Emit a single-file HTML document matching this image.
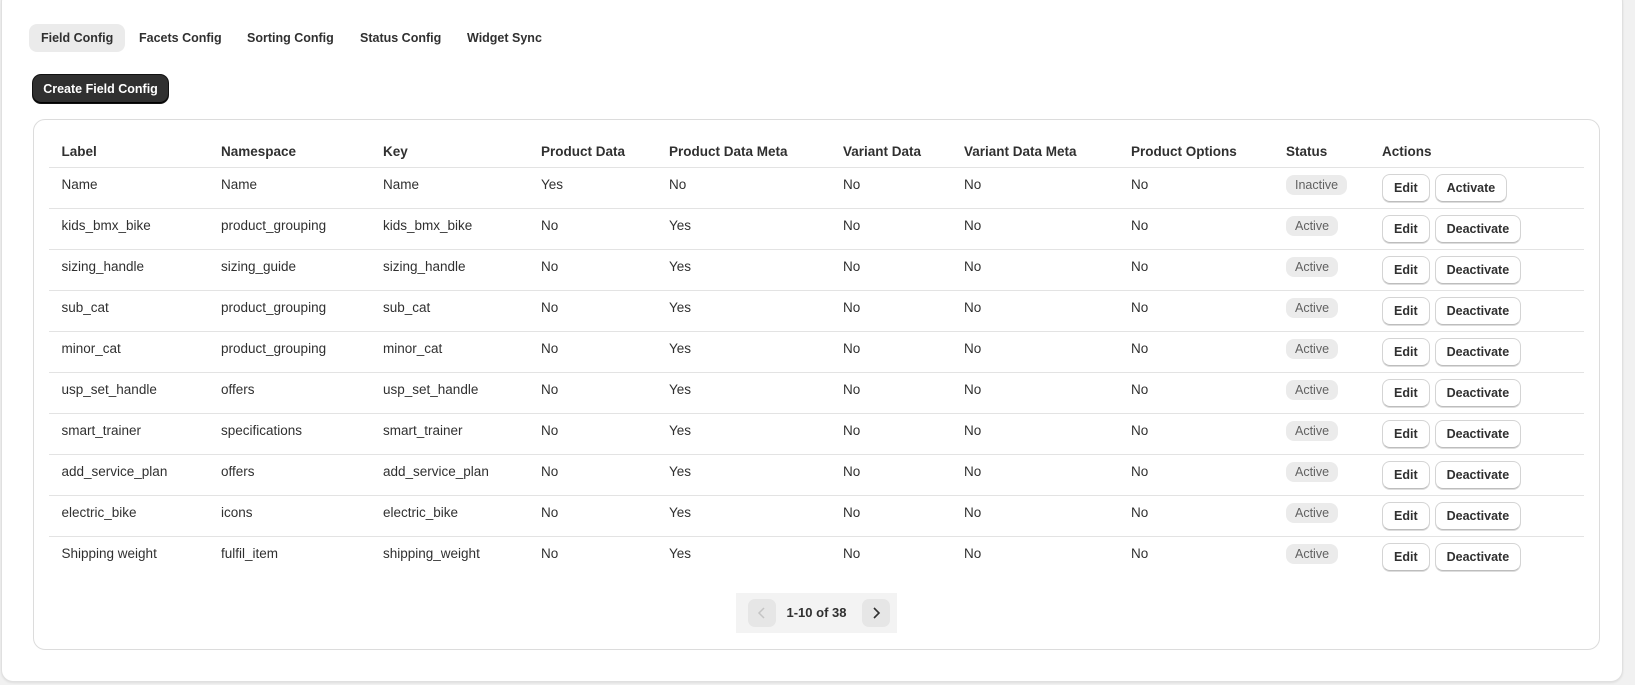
<!DOCTYPE html>
<html><head><style>
*{box-sizing:border-box;margin:0;padding:0}
body{width:1635px;height:685px;background:#f1f1f1;font-family:"Liberation Sans",Arial,sans-serif;color:#303030;position:relative;overflow:hidden}
.panel{position:absolute;left:1px;top:-10px;width:1622px;height:692px;background:#fff;border:1px solid #e0e0e0;border-radius:12px;box-shadow:0 1px 2px rgba(0,0,0,.08)}
.tab{position:absolute;top:24px;height:28px;line-height:28px;font-size:12.5px;font-weight:bold;color:#303030;padding:0 12px;border-radius:8px}
.tab.on{background:#ebebeb}
.create{position:absolute;left:33px;top:75px;width:135px;height:28px;background:#303030;color:#fff;border-radius:8px;font-size:12.5px;font-weight:bold;text-align:center;line-height:28px;box-shadow:inset 0 -1px 0 #000,0 0 0 1px #111}
.card{position:absolute;left:33px;top:119px;width:1567px;height:531px;border:1px solid #dcdcdc;border-radius:12px;background:#fff}
table{position:absolute;left:49px;top:135px;border-collapse:collapse;table-layout:fixed;width:1535px;font-size:13.5px}
th{text-align:left;font-weight:bold;height:32px;padding-left:12px;padding-top:2px;border-bottom:1px solid #e3e3e3;color:#303030}
td{height:41px;padding-left:12px;padding-bottom:6px;border-bottom:1px solid #e3e3e3;color:#303030}
tr:last-child td{border-bottom:none}
th:first-child,td:first-child{padding-left:12.5px}
.badge{display:inline-block;background:#ebebeb;color:#616161;border-radius:8px;font-size:12.5px;padding:0 9px;height:20px;line-height:20px}
.btn{position:relative;top:3px;display:inline-block;border:1px solid #d4d4d4;border-bottom-color:#bdbdbd;border-radius:8px;height:28px;line-height:26px;font-size:12.5px;font-weight:bold;padding:0 11px;margin-right:5px;background:#fff;color:#303030;box-shadow:0 1px 0 #ddd}
.pag{position:absolute;left:736px;top:593px;width:161px;height:40px;background:#f3f3f3}
.pb{position:absolute;top:6px;width:28px;height:28px;border-radius:7px;background:#e6e6e6}
.pt{position:absolute;left:0;width:161px;top:0;line-height:40px;text-align:center;font-size:13px;font-weight:bold}
</style></head><body>
<div class="panel"></div>
<div class="tab on" style="left:29px">Field Config</div>
<div class="tab" style="left:127px">Facets Config</div>
<div class="tab" style="left:235px">Sorting Config</div>
<div class="tab" style="left:348px">Status Config</div>
<div class="tab" style="left:455px">Widget Sync</div>
<div class="create">Create Field Config</div>
<div class="card"></div>
<table>
<colgroup><col style="width:160px"><col style="width:162px"><col style="width:158px"><col style="width:128px"><col style="width:174px"><col style="width:121px"><col style="width:167px"><col style="width:155px"><col style="width:96px"><col style="width:214px"></colgroup>
<tr><th>Label</th><th>Namespace</th><th>Key</th><th>Product Data</th><th>Product Data Meta</th><th>Variant Data</th><th>Variant Data Meta</th><th>Product Options</th><th>Status</th><th>Actions</th></tr>
<tr><td>Name</td><td>Name</td><td>Name</td><td>Yes</td><td>No</td><td>No</td><td>No</td><td>No</td><td><span class="badge">Inactive</span></td><td><span class="btn">Edit</span><span class="btn">Activate</span></td></tr>
<tr><td>kids_bmx_bike</td><td>product_grouping</td><td>kids_bmx_bike</td><td>No</td><td>Yes</td><td>No</td><td>No</td><td>No</td><td><span class="badge">Active</span></td><td><span class="btn">Edit</span><span class="btn">Deactivate</span></td></tr>
<tr><td>sizing_handle</td><td>sizing_guide</td><td>sizing_handle</td><td>No</td><td>Yes</td><td>No</td><td>No</td><td>No</td><td><span class="badge">Active</span></td><td><span class="btn">Edit</span><span class="btn">Deactivate</span></td></tr>
<tr><td>sub_cat</td><td>product_grouping</td><td>sub_cat</td><td>No</td><td>Yes</td><td>No</td><td>No</td><td>No</td><td><span class="badge">Active</span></td><td><span class="btn">Edit</span><span class="btn">Deactivate</span></td></tr>
<tr><td>minor_cat</td><td>product_grouping</td><td>minor_cat</td><td>No</td><td>Yes</td><td>No</td><td>No</td><td>No</td><td><span class="badge">Active</span></td><td><span class="btn">Edit</span><span class="btn">Deactivate</span></td></tr>
<tr><td>usp_set_handle</td><td>offers</td><td>usp_set_handle</td><td>No</td><td>Yes</td><td>No</td><td>No</td><td>No</td><td><span class="badge">Active</span></td><td><span class="btn">Edit</span><span class="btn">Deactivate</span></td></tr>
<tr><td>smart_trainer</td><td>specifications</td><td>smart_trainer</td><td>No</td><td>Yes</td><td>No</td><td>No</td><td>No</td><td><span class="badge">Active</span></td><td><span class="btn">Edit</span><span class="btn">Deactivate</span></td></tr>
<tr><td>add_service_plan</td><td>offers</td><td>add_service_plan</td><td>No</td><td>Yes</td><td>No</td><td>No</td><td>No</td><td><span class="badge">Active</span></td><td><span class="btn">Edit</span><span class="btn">Deactivate</span></td></tr>
<tr><td>electric_bike</td><td>icons</td><td>electric_bike</td><td>No</td><td>Yes</td><td>No</td><td>No</td><td>No</td><td><span class="badge">Active</span></td><td><span class="btn">Edit</span><span class="btn">Deactivate</span></td></tr>
<tr><td>Shipping weight</td><td>fulfil_item</td><td>shipping_weight</td><td>No</td><td>Yes</td><td>No</td><td>No</td><td>No</td><td><span class="badge">Active</span></td><td><span class="btn">Edit</span><span class="btn">Deactivate</span></td></tr>
</table>
<div class="pag">
<div class="pb" style="left:12px"><svg width="28" height="28"><path d="M16 9l-5 5 5 5" fill="none" stroke="#c4c4c4" stroke-width="1.5"/></svg></div>
<div class="pt">1-10 of 38</div>
<div class="pb" style="left:126px"><svg width="28" height="28"><path d="M12 9l5 5-5 5" fill="none" stroke="#303030" stroke-width="1.6"/></svg></div>
</div>
</body></html>
